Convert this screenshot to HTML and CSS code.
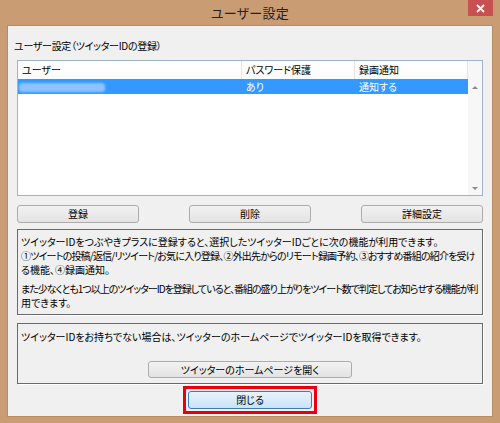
FILE: index.html
```html
<!DOCTYPE html>
<html lang="ja">
<head>
<meta charset="utf-8">
<link rel="stylesheet" href="styles.css">
</head>
<body>
<div class="window">
  <div class="titlebar">
    <span></span>
    <div class="title">ユーザー設定</div>
    <div class="close-btn">
      <svg width="9" height="9" viewBox="0 0 9 9"><path d="M1 1 L8 8 M8 1 L1 8" stroke="#fff" stroke-width="1.8"/></svg>
    </div>
  </div>
  <div class="client">
    <div class="group-label">ユーザー設定（ツイッターIDの登録）</div>
    <div class="listbox">
      <div class="list-main">
        <div class="list-header">
          <div class="col c1">ユーザー</div>
          <div class="col c2">パスワード保護</div>
          <div class="col c3">録画通知</div>
        </div>
        <div class="list-row selected">
          <div class="col c1"><span class="masked"></span></div>
          <div class="col c2">あり</div>
          <div class="col c3">通知する</div>
        </div>
      </div>
      <div class="scrollbar">
        <span class="arrow-up"></span>
        <span class="arrow-down"></span>
      </div>
    </div>
    <div class="btn-row">
      <button class="btn">登録</button>
      <button class="btn">削除</button>
      <button class="btn">詳細設定</button>
    </div>
    <div class="info-box">
      <p class="para"><span class="line">ツイッターIDをつぶやきプラスに登録すると、選択したツイッターIDごとに次の機能が利用できます。</span><span class="line tight">①ツイートの投稿/返信/リツイート/お気に入り登録、②外出先からのリモート録画予約、③おすすめ番組の紹介を受け</span><span class="line">る機能、④録画通知。</span></p>
      <p class="para second"><span class="line tighter">また少なくとも1つ以上のツイッターIDを登録していると、番組の盛り上がりをツイート数で判定してお知らせする機能が利</span><span class="line">用できます。</span></p>
    </div>
    <div class="info-box2">
      <p class="para">ツイッターIDをお持ちでない場合は、ツイッターのホームページでツイッターIDを取得できます。</p>
      <div class="home-row"><button class="btn home-btn">ツイッターのホームページを開く</button></div>
    </div>
    <div class="close-row">
      <div class="highlight"><button class="btn primary">閉じる</button></div>
    </div>
  </div>
</div>
</body>
</html>
```

FILE: styles.css
```css
html, body {
  margin: 0;
  padding: 0;
}
body {
  font-family: "Noto Sans CJK JP", "Noto Sans", sans-serif;
  font-feature-settings: "palt";
  font-size: 10px;
  color: #000;
}
.window {
  width: 500px;
  height: 423px;
  background: #c99c73;
  box-sizing: border-box;
  display: flex;
  flex-direction: column;
}
.titlebar {
  height: 25px;
  display: grid;
  grid-template-columns: 1fr auto 1fr;
  padding: 0 7px;
}
.title {
  font-size: 13px;
  line-height: 26px;
  color: #222;
  letter-spacing: 0.3px;
}
.close-btn {
  justify-self: end;
  width: 25px;
  height: 16px;
  background: #c75050;
  display: flex;
  align-items: center;
  justify-content: center;
}
.client {
  margin: 0 7px;
  height: 392px;
  background: #f0f0f0;
  box-sizing: border-box;
  border: 1px solid #b88c65;
  display: flex;
  flex-direction: column;
}
.group-label {
  margin: 13px 0 0 6px;
  line-height: 14px;
  letter-spacing: -0.3px;
}
.listbox {
  margin: 7px 9px 0 9px;
  height: 136px;
  box-sizing: border-box;
  border: 1px solid #9fb4cb;
  background: #fff;
  display: flex;
}
.list-main {
  flex: 1;
}
.list-header, .list-row {
  display: flex;
}
.list-header {
  height: 18px;
  line-height: 18px;
  background: linear-gradient(#ffffff, #fbfbfb);
}
.list-header .col {
  border-right: 1px solid #e5e5e5;
}
.col {
  box-sizing: border-box;
  padding-left: 4px;
  white-space: nowrap;
}
.c1 { width: 224px; }
.c2 { width: 113px; }
.c3 { width: 113px; }
.list-row {
  height: 15px;
  line-height: 15px;
}
.selected {
  background: #3399ff;
  color: #fff;
}
.masked {
  display: inline-block;
  width: 86px;
  height: 9px;
  margin-left: -3px;
  vertical-align: -1px;
  background: #8cc4ff;
  border-radius: 3px;
  filter: blur(1.2px);
}
.scrollbar {
  width: 14px;
  background: #f7f7f7;
  display: flex;
  flex-direction: column;
  align-items: center;
  justify-content: space-between;
  padding: 25px 0 5px;
  box-sizing: border-box;
}
.arrow-up, .arrow-down {
  width: 0;
  height: 0;
  border-left: 3px solid transparent;
  border-right: 3px solid transparent;
}
.arrow-up { border-bottom: 3px solid #8a8a8a; }
.arrow-down { border-top: 3px solid #8a8a8a; }
.btn-row {
  margin: 9px 9px 0 9px;
  display: flex;
  justify-content: space-between;
}
.btn {
  font: inherit;
  color: #000;
  height: 18px;
  padding: 0;
  line-height: 16px;
  border: 1px solid #acacac;
  border-radius: 3px;
  background: linear-gradient(#f2f2f2, #e3e3e3);
  box-sizing: border-box;
}
.btn-row .btn {
  width: 122px;
}
.info-box, .info-box2 {
  margin: 6px 9px 0 9px;
  border: 1px solid #6a6a6a;
  box-shadow: 1px 1px 0 #ffffff;
  box-sizing: border-box;
}
.info-box {
  height: 86px;
  padding: 5px 0 0 3px;
}
.info-box2 {
  margin-top: 8px;
  height: 61px;
  padding: 6px 0 0 3px;
}
.para {
  margin: 0;
  line-height: 14px;
  white-space: nowrap;
}
.line {
  display: block;
}
.tight {
  letter-spacing: -0.8px;
}
.tighter {
  letter-spacing: -1px;
}
.second {
  margin-top: 5px;
}
.home-row {
  margin-top: 17px;
  display: flex;
  justify-content: center;
  padding-right: 3px;
}
.home-btn {
  width: 204px;
  height: 17px;
  line-height: 15px;
}
.close-row {
  margin-top: 2px;
  display: flex;
  justify-content: center;
}
.highlight {
  border: 3px solid #e60012;
  padding: 2px;
  display: flex;
}
.primary {
  width: 124px;
  height: 18px;
  border-color: #3c7fb1;
  background: linear-gradient(#e8f3fc, #c9e2f8);
}
```
